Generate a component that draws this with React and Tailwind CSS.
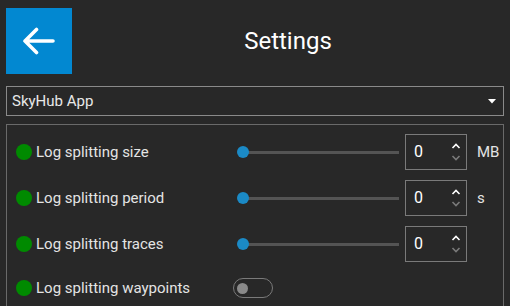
import React from "react";

function Row({ label, unit, kind }) {
  return (
    <div className="flex items-center h-[36px]">
      <div className="w-[16px] h-[16px] rounded-full bg-[#008a00] shrink-0" />
      <div className="ml-[4px] w-[201px] text-[15px] text-[#e4e4e4] leading-none">{label}</div>
      {kind === "slider" ? (
        <>
          <div className="relative w-[162px] h-[12px] flex items-center">
            <div className="absolute left-[6px] right-0 h-[3px] bg-[#545454]" />
            <div className="absolute left-0 w-[12px] h-[12px] rounded-full bg-[#1b8ac6]" />
          </div>
          <div className="ml-[6px] w-[62px] h-[36px] border border-[#7a7a7a] flex items-center relative">
            <span className="ml-[8px] text-[16px] text-white leading-none">0</span>
            <svg className="absolute right-[5px] top-[8px]" width="10" height="6" viewBox="0 0 10 6">
              <path d="M1.5 5 L5 1.5 L8.5 5" stroke="#ffffff" strokeWidth="1.6" fill="none" />
            </svg>
            <svg className="absolute right-[5px] bottom-[8px]" width="10" height="6" viewBox="0 0 10 6">
              <path d="M1.5 1 L5 4.5 L8.5 1" stroke="#7a7a7a" strokeWidth="1.6" fill="none" />
            </svg>
          </div>
          <div className="ml-[10px] text-[15px] text-[#e4e4e4] leading-none">{unit}</div>
        </>
      ) : (
        <div className="-ml-[4px] w-[40px] h-[20px] rounded-full border border-[#7a7a7a] flex items-center">
          <div className="ml-[3px] w-[11px] h-[11px] rounded-full bg-[#8a8a8a]" />
        </div>
      )}
    </div>
  );
}

export default function App() {
  return (
    <div
      className="w-[510px] h-[306px] bg-[#282828] overflow-hidden"
      style={{ fontFamily: "Roboto, 'Liberation Sans', sans-serif" }}
    >
      <div className="flex items-center pt-[8px] pl-[6px] pr-[6px]">
        <div className="w-[66px] h-[66px] bg-[#0288d1] flex items-center justify-center">
          <svg width="32" height="28" viewBox="0 0 32 28">
            <path
              d="M2 14 H30 M13.5 2.5 L2 14 L13.5 25.5"
              stroke="#ffffff"
              strokeWidth="3.6"
              strokeLinecap="round"
              strokeLinejoin="round"
              fill="none"
            />
          </svg>
        </div>
        <div className="flex-1 text-center text-[24px] text-white leading-none">Settings</div>
      </div>
      <div className="mx-[6px] mt-[12px] h-[30px] border border-[#8a8a8a] flex items-center justify-between pl-[5px] pr-[7px]">
        <span className="text-[15px] text-[#e8e8e8] leading-none">SkyHub App</span>
        <svg width="8" height="5" viewBox="0 0 8 5">
          <path d="M0 0 H8 L4 4.5 Z" fill="#ffffff" />
        </svg>
      </div>
      <div className="mx-[6px] mt-[8px] h-[200px] border border-[#6a6a6a] pl-[9px] pt-[9px] flex flex-col gap-[10px]">
        <Row label="Log splitting size" unit="MB" kind="slider" />
        <Row label="Log splitting period" unit="s" kind="slider" />
        <Row label="Log splitting traces" unit="" kind="slider" />
        <div className="-mt-[2px]">
          <Row label="Log splitting waypoints" kind="toggle" />
        </div>
      </div>
    </div>
  );
}
